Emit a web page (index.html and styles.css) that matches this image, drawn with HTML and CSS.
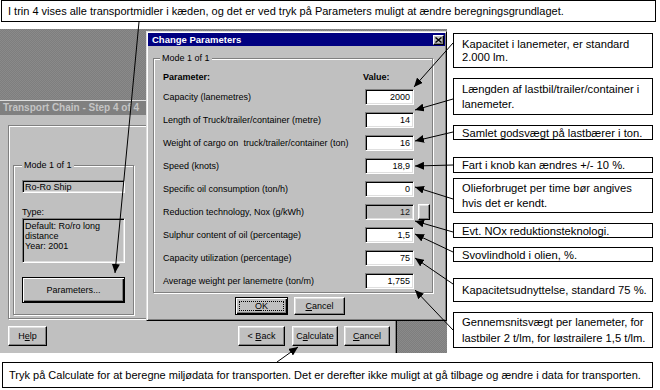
FILE: index.html
```html
<!DOCTYPE html>
<html>
<head>
<meta charset="utf-8">
<link rel="stylesheet" href="styles.css">
</head>
<body>
<div class="canvas">
  <div class="desktop">
    <div class="win main">
      <div class="titlebar inactive">Transport Chain - Step 4 of 4</div>
      <div class="main-body">
        <div class="panel">
          <fieldset class="group mode">
            <legend>Mode 1 of 1</legend>
            <div class="field ro">Ro-Ro Ship</div>
            <div class="type-label">Type:</div>
            <div class="field area">Default: Ro/ro long<br>distance<br>Year: 2001</div>
            <button class="btn default params"><span>Parameters...</span></button>
          </fieldset>
        </div>
        <div class="main-buttons">
          <button class="btn help"><span>H<u>e</u>lp</span></button>
          <button class="btn back"><span>&lt; <u>B</u>ack</span></button>
          <button class="btn calc"><span>C<u>a</u>lculate</span></button>
          <button class="btn cancel-main"><span><u>C</u>ancel</span></button>
        </div>
      </div>
    </div>

    <div class="win dialog">
      <div class="titlebar active">
        <span>Change Parameters</span>
        <span class="close"><svg width="7" height="6" viewBox="0 0 7 6"><path d="M0.5 0.5L6.5 5.5M6.5 0.5L0.5 5.5" stroke="#000" stroke-width="1.4"/></svg></span>
      </div>
      <fieldset class="group params-group">
        <legend>Mode 1 of 1</legend>
        <div class="pgrid">
          <div class="hd">Parameter:</div><div class="hd val">Value:</div><div></div>
          <div class="lab">Capacity (lanemetres)</div><div class="tb">2000</div><div></div>
          <div class="lab">Length of Truck/trailer/container (metre)</div><div class="tb">14</div><div></div>
          <div class="lab">Weight of cargo on&nbsp; truck/trailer/container (ton)</div><div class="tb">16</div><div></div>
          <div class="lab">Speed (knots)</div><div class="tb">18,9</div><div></div>
          <div class="lab">Specific oil consumption (ton/h)</div><div class="tb">0</div><div></div>
          <div class="lab">Reduction technology, Nox (g/kWh)</div><div class="tb disabled">12</div><div class="btn mini"></div>
          <div class="lab">Sulphur content of oil (percentage)</div><div class="tb">1,5</div><div></div>
          <div class="lab">Capacity utilization (percentage)</div><div class="tb">75</div><div></div>
          <div class="lab">Average weight per lanemetre (ton/m)</div><div class="tb">1,755</div><div></div>
        </div>
      </fieldset>
      <div class="dlg-buttons">
        <button class="btn default ok"><span class="focus"><u>O</u>K</span></button>
        <button class="btn dcancel"><span><u>C</u>ancel</span></button>
      </div>
    </div>
  </div>

  <div class="callout c-top">I trin 4 vises alle transportmidler i kæden, og det er ved tryk på Parameters muligt at ændre beregningsgrundlaget.</div>
  <div class="callout c1">Kapacitet i lanemeter, er standard<br>2.000 lm.</div>
  <div class="callout c2">Længden af lastbil/trailer/container i<br>lanemeter.</div>
  <div class="callout c3">Samlet godsvægt på lastbærer i ton.</div>
  <div class="callout c4">Fart i knob kan ændres +/- 10 %.</div>
  <div class="callout c5">Olieforbruget per time bør angives<br>hvis det er kendt.</div>
  <div class="callout c6">Evt. NOx reduktionsteknologi.</div>
  <div class="callout c7">Svovlindhold i olien, %.</div>
  <div class="callout c8">Kapacitetsudnyttelse, standard 75 %.</div>
  <div class="callout c9">Gennemsnitsvægt per lanemeter, for<br>lastbiler 2 t/lm, for løstrailere 1,5 t/lm.</div>
  <div class="callout c-bottom">Tryk på Calculate for at beregne miljødata for transporten. Det er derefter ikke muligt at gå tilbage og ændre i data for transporten.</div>

  <svg class="arrows" width="660" height="390" viewBox="0 0 660 390">
    <defs>
      <marker id="ah" markerUnits="userSpaceOnUse" viewBox="0 0 9 8" markerWidth="9" markerHeight="8" refX="9" refY="4" orient="auto">
        <path d="M0 0L9 4L0 8z" fill="#000"/>
      </marker>
    </defs>
    <path class="ar" d="M139 22L115 273"/>
    <path class="ar" d="M453 43L414 87"/>
    <path class="ar" d="M453 99L415 110"/>
    <path class="ar" d="M453 132L415 141"/>
    <path class="ar" d="M453 165L415 166"/>
    <path class="ar" d="M453 199L415 187"/>
    <path class="ar" d="M453 232L415 221"/>
    <path class="ar" d="M453 252L415 234"/>
    <path class="ar" d="M453 284L415 258"/>
    <path class="ar" d="M453 330L415 290"/>
    <path class="ar" d="M277 362L298 347"/>
  </svg>
</div>
</body>
</html>
```
FILE: styles.css
```css
html, body {
  margin: 0;
  background: #fff;
  font-family: "Liberation Sans", Arial, sans-serif;
  color: #000;
}

.canvas {
  position: relative;
  width: 660px;
  height: 390px;
  overflow: hidden;
}

/* ---------- screenshot area ---------- */
.desktop {
  position: relative;
  margin-top: 29px;
  width: 447px;
  height: 324px;
  background: repeating-conic-gradient(#8a8a8a 0 25%, #7e7e7e 0 50%) 0 0 / 2px 2px;
}

.win {
  position: absolute;
  box-sizing: border-box;
  background: #c0c0c0;
  display: flex;
  flex-direction: column;
}

.win.main {
  left: 0;
  top: 71px;
  width: 397px;
  height: 253px;
  border-top: 1px solid #dfdfdf;
  border-right: 1px solid #000;
  box-shadow: inset -1px 0 #808080;
}

.titlebar {
  box-sizing: border-box;
  font-weight: bold;
  white-space: nowrap;
}

.titlebar.inactive {
  height: 14px;
  line-height: 14px;
  background: #808080;
  color: #c4c4c4;
  font-size: 10px;
  padding-left: 3px;
  margin-right: 1px;
}

.main-body {
  flex: 1;
  display: flex;
  flex-direction: column;
  padding: 10px 6px 7px 8px;
}

.panel {
  box-sizing: border-box;
  height: 194px;
  border: 1px solid #808080;
  box-shadow: inset 1px 1px #fff, 1px 1px #fff;
  padding: 33px 0 0 4px;
}

fieldset.group {
  box-sizing: border-box;
  margin: 0;
  border: 1px solid #808080;
  box-shadow: inset 1px 1px #fff, 1px 1px #fff;
  display: flex;
  flex-direction: column;
  min-width: 0;
}

fieldset.group legend {
  font-size: 9px;
  line-height: 12px;
  padding: 0 2px;
  background: #c0c0c0;
}

fieldset.mode {
  width: 121px;
  height: 156px;
  padding: 0 8px;
}

.field {
  box-sizing: border-box;
  border: 1px solid;
  border-color: #808080 #fff #fff #808080;
  box-shadow: inset 1px 1px #000, inset -1px -1px #dfdfdf;
  background: #c0c0c0;
  font-size: 9px;
  line-height: 10px;
  white-space: nowrap;
}

.field.ro {
  margin-top: 9px;
  height: 13px;
  padding: 1px 1px 0 2px;
}

.type-label {
  margin-top: 14px;
  font-size: 9px;
  line-height: 10px;
}

.field.area {
  margin-top: 1px;
  height: 45px;
  padding: 2px 1px 0 2px;
}

.btn {
  box-sizing: border-box;
  background: #c0c0c0;
  border: 1px solid;
  border-color: #fff #000 #000 #fff;
  box-shadow: inset -1px -1px #808080, inset 1px 1px #dfdfdf;
  font-family: "Liberation Sans", Arial, sans-serif;
  font-size: 9px;
  color: #000;
  padding: 0;
  margin: 0;
  display: flex;
  align-items: center;
  justify-content: center;
  white-space: nowrap;
}

.btn.params {
  margin-top: 14px;
  height: 26px;
  width: 103px;
}

.main-buttons {
  display: flex;
  margin-top: 7px;
  height: 20px;
}

.main-buttons .btn { height: 20px; }
.btn.help { width: 39px; margin-right: auto; }
.btn.back { width: 47px; }
.btn.calc { width: 46px; margin-left: 7px; }
.btn.cancel-main { width: 46px; margin-left: 6px; }

/* ---------- dialog ---------- */
.win.dialog {
  left: 146px;
  top: 2px;
  width: 301px;
  height: 290px;
  border: 1px solid;
  border-color: #dfdfdf #000 #000 #dfdfdf;
  box-shadow: inset 1px 1px #fff, inset -1px -1px #808080;
  padding: 1px;
}

.titlebar.active {
  height: 13px;
  background: #000080;
  color: #fff;
  font-size: 9.5px;
  display: flex;
  align-items: center;
  justify-content: space-between;
  padding: 0 1px 0 4px;
}

.close {
  box-sizing: border-box;
  width: 11px;
  height: 10px;
  background: #c0c0c0;
  border: 1px solid;
  border-color: #fff #000 #000 #fff;
  box-shadow: inset -1px -1px #808080;
  display: flex;
  align-items: center;
  justify-content: center;
}

.close svg { display: block; }

fieldset.params-group {
  margin: 6px 0 0 5px;
  width: 280px;
  height: 241px;
  padding: 5px 0 0 9px;
}

fieldset.params-group legend {
  margin-left: -3px;
}

.pgrid {
  display: grid;
  grid-template-columns: 198px 49px 12px;
  grid-template-rows: 16px repeat(9, 23px);
  column-gap: 4px;
  align-items: center;
  font-size: 9px;
}

.hd {
  font-weight: bold;
}

.hd.val {
  margin-left: -2px;
}

.lab {
  white-space: nowrap;
}

.tb {
  box-sizing: border-box;
  height: 16px;
  border: 1px solid;
  border-color: #808080 #fff #fff #808080;
  box-shadow: inset 1px 1px #000, inset -1px -1px #dfdfdf;
  background: #fff;
  text-align: right;
  padding-right: 3px;
  line-height: 14px;
}

.tb.disabled {
  background: #c0c0c0;
  color: #202020;
}

.btn.mini {
  height: 16px;
  width: 12px;
}

.dlg-buttons {
  display: flex;
  justify-content: center;
  gap: 6px;
  margin-top: 4px;
  padding-right: 13px;
}

.dlg-buttons .btn { height: 18px; }
.btn.ok { width: 53px; }
.btn.dcancel { width: 51px; }

.btn.default {
  border-color: #000;
  box-shadow: inset 1px 1px #fff, inset -1px -1px #000, inset -2px -2px #808080;
}

.btn .focus {
  align-self: stretch;
  flex: 1;
  margin: 3px;
  border: 1px dotted #000;
  display: flex;
  align-items: center;
  justify-content: center;
}

/* ---------- callouts ---------- */
.callout {
  position: absolute;
  box-sizing: border-box;
  border: 1px solid #000;
  background: #fff;
  font-size: 11.2px;
  line-height: 14px;
  padding-left: 8px;
  display: flex;
  flex-direction: column;
  justify-content: center;
  white-space: nowrap;
}

.c-top { left: 1px; top: 0; width: 655px; height: 22px; padding-left: 6px; font-size: 11px; }
.c1 { left: 453px; top: 33px; width: 200px; height: 35px; line-height: 13px; }
.c2 { left: 453px; top: 78px; width: 200px; height: 37px; line-height: 15px; }
.c3 { left: 453px; top: 125px; width: 200px; height: 15px; }
.c4 { left: 453px; top: 157px; width: 200px; height: 16px; }
.c5 { left: 453px; top: 178px; width: 200px; height: 35px; line-height: 15px; }
.c6 { left: 453px; top: 223px; width: 200px; height: 15px; }
.c7 { left: 453px; top: 247px; width: 200px; height: 15px; }
.c8 { left: 453px; top: 278px; width: 200px; height: 24px; }
.c9 { left: 453px; top: 312px; width: 200px; height: 36px; line-height: 16px; }
.c-bottom { left: 2px; top: 362px; width: 651px; height: 26px; padding-left: 6px; font-size: 11px; }

/* ---------- arrows ---------- */
.arrows {
  position: absolute;
  left: 0;
  top: 0;
  pointer-events: none;
}

.ar {
  stroke: #000;
  stroke-width: 1;
  fill: none;
  marker-end: url(#ah);
}
```
